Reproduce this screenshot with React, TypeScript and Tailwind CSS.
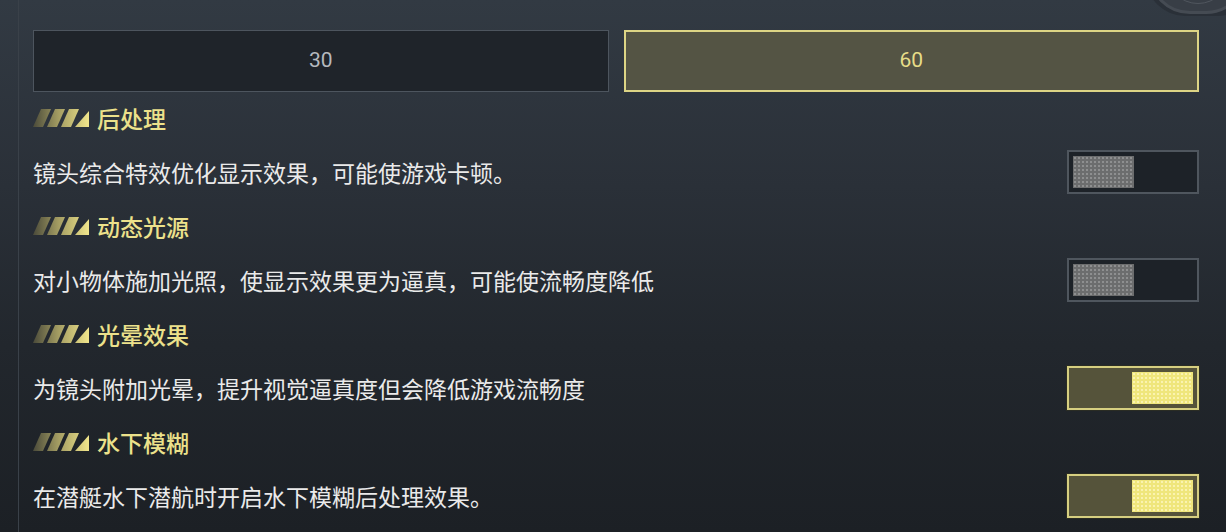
import React from "react";

const sections = [
  { title: "后处理", desc: "镜头综合特效优化显示效果，可能使游戏卡顿。", on: false },
  { title: "动态光源", desc: "对小物体施加光照，使显示效果更为逼真，可能使流畅度降低", on: false },
  { title: "光晕效果", desc: "为镜头附加光晕，提升视觉逼真度但会降低游戏流畅度", on: true },
  { title: "水下模糊", desc: "在潜艇水下潜航时开启水下模糊后处理效果。", on: true },
];

function Stripes({ id }: { id: string }) {
  return (
    <svg width="56" height="18" viewBox="0 0 56 18" className="shrink-0">
      <defs>
        <linearGradient id={id} x1="0" y1="0" x2="56" y2="0" gradientUnits="userSpaceOnUse">
          <stop offset="0" stopColor="#4a4a3a" />
          <stop offset="0.45" stopColor="#a39c62" />
          <stop offset="1" stopColor="#f0e58b" />
        </linearGradient>
      </defs>
      <polygon points="0,18 8,0 18,0 10,18" fill={`url(#${id})`} />
      <polygon points="14,18 22,0 32,0 24,18" fill={`url(#${id})`} />
      <polygon points="28,18 36,0 46,0 38,18" fill={`url(#${id})`} />
      <polygon points="42,18 56,18 56,2" fill={`url(#${id})`} />
    </svg>
  );
}

function Toggle({ on }: { on: boolean }) {
  if (on) {
    return (
      <div className="w-[132px] h-[44px] shrink-0 border-2 border-[#d6cf80] bg-[#55533a] p-[4px] flex justify-end shadow-[0_0_0_1px_#2a2c24]">
        <div className="w-[61px] h-full bg-[#efe67c] bg-[radial-gradient(circle,#faf3b0_0.8px,transparent_1px)] bg-[length:4px_4px]" />
      </div>
    );
  }
  return (
    <div className="w-[132px] h-[44px] shrink-0 border-2 border-[#4f565e] bg-[#1d2228] p-[4px] flex justify-start">
      <div className="w-[61px] h-full bg-[#6c6d6e] bg-[radial-gradient(circle,#8e8f90_0.8px,transparent_1px)] bg-[length:4px_4px]" />
    </div>
  );
}

export default function App() {
  return (
    <div
      className="relative w-[1226px] h-[532px] overflow-hidden flex bg-[linear-gradient(180deg,#323a43_0%,#2a3038_35%,#22272d_65%,#1c2025_100%)]"
      style={{ fontFamily: '"Noto Sans CJK SC", "Noto Sans", sans-serif' }}
    >
      {/* top-right decorative knob */}
      <div className="absolute right-[-30px] top-[-62px] w-[110px] h-[78px] rounded-full bg-[#2a3038]" />
      <div className="absolute right-[-22px] top-[-70px] w-[100px] h-[84px] rounded-full border-[3px] border-[#454b53] bg-[#383e46]" />
      <div className="absolute right-[-4px] top-[-60px] w-[64px] h-[64px] rounded-full border border-[#50565e]" />

      <div className="w-[18px] shrink-0" />
      <div className="flex-1 border-l border-[#3a4149] pl-[14px] pr-[27px] pt-[30px]">
        <div className="grid grid-cols-2 gap-[15px] h-[62px]">
          <div className="border border-[#4d555e] bg-[#1f242a] flex items-center justify-center">
            <span className="text-[21px] text-[#b5b9be]" style={{ fontFamily: 'Roboto, "Liberation Sans", sans-serif' }}>
              30
            </span>
          </div>
          <div className="border-2 border-[#ddd585] bg-[#545444] flex items-center justify-center">
            <span className="text-[21px] text-[#e6dd88]" style={{ fontFamily: 'Roboto, "Liberation Sans", sans-serif' }}>
              60
            </span>
          </div>
        </div>

        {sections.map((s, i) => (
          <div key={s.title} className={i === 0 ? "mt-[12px]" : "mt-[18px]"}>
            <div className="h-[28px] flex items-center gap-[8px]">
              <Stripes id={`stripe-${i}`} />
              <span className="text-[23px] leading-none font-medium text-[#ece18b]">{s.title}</span>
            </div>
            <div className="mt-[18px] h-[44px] flex items-center justify-between">
              <span className="text-[23px] leading-none text-[#eaeaea]">{s.desc}</span>
              <Toggle on={s.on} />
            </div>
          </div>
        ))}
      </div>
    </div>
  );
}
